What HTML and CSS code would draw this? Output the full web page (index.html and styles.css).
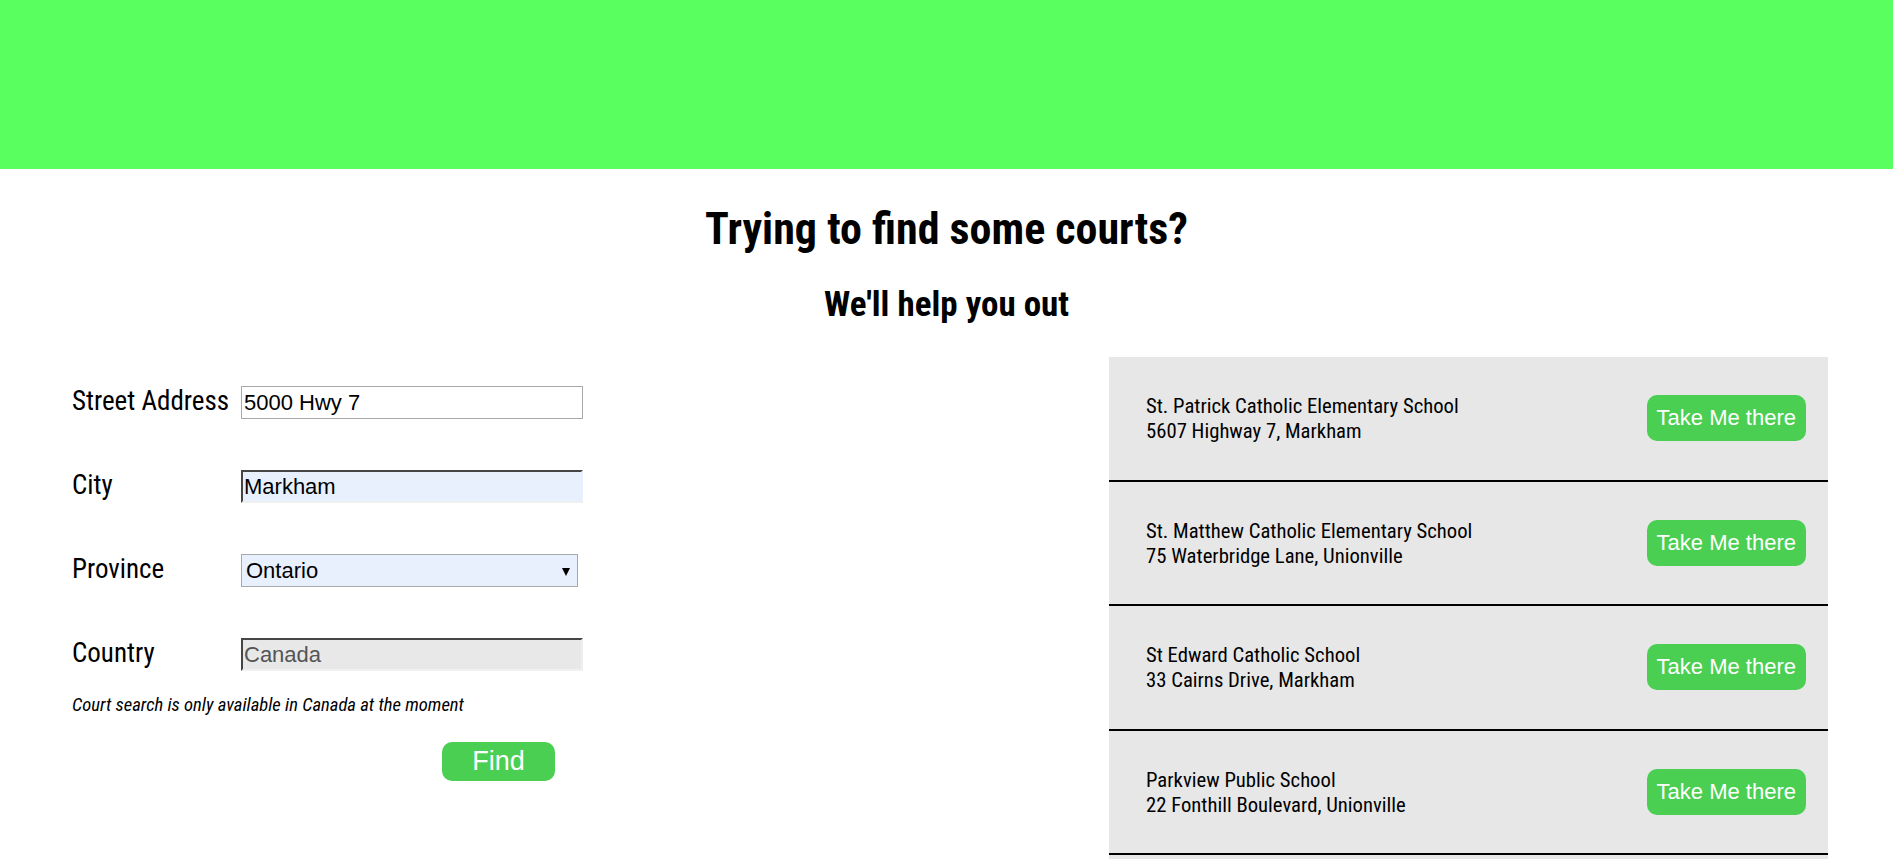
FILE: index.html
```html
<!DOCTYPE html>
<html lang="en">
<head>
<meta charset="utf-8">
<title>Court Finder</title>
<link rel="stylesheet" href="styles.css">
</head>
<body>
<header class="topbar"></header>
<main class="page">
  <h1 class="title">Trying to find some courts?</h1>
  <h2 class="subtitle">We'll help you out</h2>
  <div class="content">
    <form class="search-form">
      <div class="field">
        <label class="field-label" for="street">Street Address</label>
        <input class="text-input" id="street" type="text" value="5000 Hwy 7">
      </div>
      <div class="field">
        <label class="field-label" for="city">City</label>
        <input class="text-input autofilled" id="city" type="text" value="Markham">
      </div>
      <div class="field">
        <label class="field-label" for="province">Province</label>
        <span class="select-wrap">
          <select class="select-input" id="province">
            <option>Ontario</option>
          </select>
        </span>
      </div>
      <div class="field">
        <label class="field-label" for="country">Country</label>
        <input class="text-input disabled-input" id="country" type="text" value="Canada" disabled>
      </div>
      <p class="note">Court search is only available in Canada at the moment</p>
      <button class="find-btn" type="button">Find</button>
    </form>
    <ul class="results">
      <li class="result">
        <div class="result-text">
          <div>St. Patrick Catholic Elementary School</div>
          <div>5607 Highway 7, Markham</div>
        </div>
        <button class="go-btn" type="button">Take Me there</button>
      </li>
      <li class="result">
        <div class="result-text">
          <div>St. Matthew Catholic Elementary School</div>
          <div>75 Waterbridge Lane, Unionville</div>
        </div>
        <button class="go-btn" type="button">Take Me there</button>
      </li>
      <li class="result">
        <div class="result-text">
          <div>St Edward Catholic School</div>
          <div>33 Cairns Drive, Markham</div>
        </div>
        <button class="go-btn" type="button">Take Me there</button>
      </li>
      <li class="result">
        <div class="result-text">
          <div>Parkview Public School</div>
          <div>22 Fonthill Boulevard, Unionville</div>
        </div>
        <button class="go-btn" type="button">Take Me there</button>
      </li>
    </ul>
  </div>
</main>
</body>
</html>
```
FILE: styles.css
```css
* { box-sizing: border-box; }

html, body {
  margin: 0;
  padding: 0;
  background: #ffffff;
  overflow: hidden;
}

body {
  font-family: "Roboto Condensed", Roboto, "Liberation Sans", sans-serif;
  color: #000;
}

.topbar {
  height: 169px;
  background: #59ff5f;
}

.page {
  display: flex;
  flex-direction: column;
}

.title {
  margin: 32px 0 0;
  font-size: 44px;
  line-height: 56px;
  font-weight: 700;
  text-align: center;
}

.subtitle {
  margin: 26px 0 0;
  font-size: 35px;
  line-height: 44px;
  font-weight: 700;
  text-align: center;
}

.content {
  margin-top: 30px;
  display: grid;
  grid-template-columns: 1037px 719px;
  padding-left: 72px;
}

.search-form {
  padding-top: 29px;
  display: flex;
  flex-direction: column;
}

.field {
  display: flex;
  align-items: center;
  height: 33px;
  margin-bottom: 51px;
}

.field-label {
  width: 169px;
  font-size: 27px;
  margin-bottom: 3px;
}

.text-input {
  width: 342px;
  height: 33px;
  border: 1px solid #a9a9a9;
  padding: 0 2px;
  font-family: "Liberation Sans", Arial, sans-serif;
  font-size: 22px;
  color: #000;
  background: #fff;
}

.autofilled {
  background: #e8f0fe;
  border: 2px inset #9a9a9a;
  border-right-color: #e8f0fe;
  border-bottom-color: #f0f0f0;
  padding: 0 1px;
}

.disabled-input {
  background: #e8e8e8;
  border: 2px inset #9a9a9a;
  border-right-color: #efefef;
  border-bottom-color: #f0f0f0;
  color: #555;
  padding: 0 1px;
}

.select-wrap {
  position: relative;
  display: inline-block;
}

.select-wrap::after {
  content: "";
  position: absolute;
  right: 8px;
  top: 14px;
  border-left: 4px solid transparent;
  border-right: 4px solid transparent;
  border-top: 8px solid #000;
  pointer-events: none;
}

.select-input {
  appearance: none;
  -webkit-appearance: none;
  width: 337px;
  height: 33px;
  border: 1px solid #a9a9a9;
  border-radius: 0;
  background: #e8f0fe;
  font-family: "Liberation Sans", Arial, sans-serif;
  font-size: 22px;
  color: #000;
  padding: 0 4px;
}

.note {
  margin: -28px 0 0;
  font-size: 18.6px;
  line-height: 22px;
  font-style: italic;
}

.find-btn {
  margin: 26px 0 0 370px;
  width: 113px;
  height: 39px;
  border: none;
  border-radius: 10px;
  background: #4acf52;
  color: #fff;
  font-family: "Liberation Sans", Arial, sans-serif;
  font-size: 27px;
  padding: 0;
}

.results {
  list-style: none;
  margin: 0;
  padding: 0;
  background: #e7e7e7;
  height: 502px;
}

.result {
  height: 124.5px;
  border-bottom: 2px solid #000;
  display: flex;
  align-items: center;
  justify-content: space-between;
  padding: 0 22px 0 37px;
}

.result-text {
  font-size: 20.7px;
  line-height: 25px;
  margin-top: 2px;
}

.go-btn {
  height: 46px;
  padding: 0 10px;
  border: none;
  border-radius: 10px;
  background: #4acf52;
  color: #fff;
  font-family: "Liberation Sans", Arial, sans-serif;
  font-size: 22px;
}
```
